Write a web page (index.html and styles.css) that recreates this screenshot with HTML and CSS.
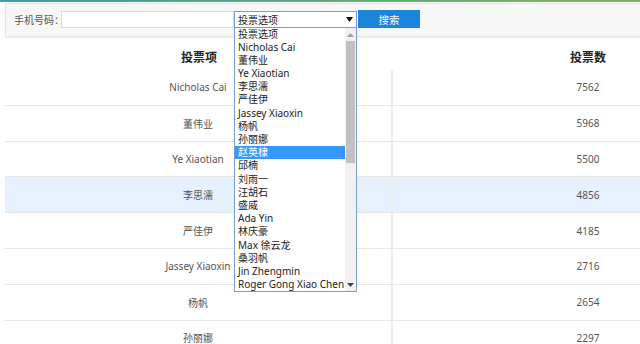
FILE: index.html
```html
<!DOCTYPE html>
<html lang="zh-CN">
<head>
  <meta charset="UTF-8">
  <title>投票结果查询</title>
  <link rel="stylesheet" href="styles.css">
</head>
<body>
  <div class="topline"></div>

  <div class="page">
    <div class="search-bar">
      <span class="label">手机号码：</span>
      <input type="text" class="phone">
      <div class="select-wrap">
        <div class="select-box">
          投票选项
          <svg class="arrow" width="7" height="5" viewBox="0 0 7 5"><polygon points="0,0 7,0 3.5,5" fill="#111"/></svg>
        </div>
        <div class="options">
          <ul class="option-list">
            <li>投票选项</li>
            <li>Nicholas Cai</li>
            <li>董伟业</li>
            <li>Ye Xiaotian</li>
            <li>李思濡</li>
            <li>严佳伊</li>
            <li>Jassey Xiaoxin</li>
            <li>杨帆</li>
            <li>孙丽娜</li>
            <li class="selected">赵英棣</li>
            <li>邱楠</li>
            <li>刘雨一</li>
            <li>汪胡石</li>
            <li>盛威</li>
            <li>Ada Yin</li>
            <li>林庆豪</li>
            <li>Max 徐云龙</li>
            <li>桑羽帆</li>
            <li>Jin Zhengmin</li>
            <li>Roger Gong Xiao Chen</li>
          </ul>
          <div class="scrollbar">
            <svg class="sb-up" width="7" height="4" viewBox="0 0 7 4"><polygon points="0,4 7,4 3.5,0" fill="#a3a3a3"/></svg>
            <div class="sb-track"><div class="sb-thumb"></div></div>
            <svg class="sb-down" width="7" height="4" viewBox="0 0 7 4"><polygon points="0,0 7,0 3.5,4" fill="#444"/></svg>
          </div>
        </div>
      </div>
      <button class="search-btn">搜索</button>
    </div>

    <table class="votes">
      <tr>
        <th>投票项</th>
        <th>投票数</th>
      </tr>
      <tr><td>Nicholas Cai</td><td>7562</td></tr>
      <tr><td>董伟业</td><td>5968</td></tr>
      <tr><td>Ye Xiaotian</td><td>5500</td></tr>
      <tr class="hover"><td>李思濡</td><td>4856</td></tr>
      <tr><td>严佳伊</td><td>4185</td></tr>
      <tr><td>Jassey Xiaoxin</td><td>2716</td></tr>
      <tr><td>杨帆</td><td>2654</td></tr>
      <tr><td>孙丽娜</td><td>2297</td></tr>
    </table>
  </div>
</body>
</html>
```

FILE: styles.css
```css
body {
  margin: 0;
  font-family: "Noto Sans", "Noto Sans CJK SC", sans-serif;
  font-size: 10px;
  color: #555;
  background-color: #fff;
  overflow: hidden;
}

.topline {
  height: 2px;
  background: linear-gradient(to right, #3c9ea6, #82b55a);
}

.page {
  width: 778px;
  margin-left: 5px;
}

.search-bar {
  display: flex;
  align-items: center;
  margin-top: 1px;
  padding: 6px 8px 8px;
  background-color: #f7f7f7;
  border: 1px solid #e6e6e6;
  box-shadow: 0 1px 2px rgba(0,0,0,0.08);
}

.label {
  flex-shrink: 0;
  width: 47px;
  white-space: nowrap;
  color: #555;
}

.phone {
  width: 173px;
  height: 17px;
  margin: 0;
  padding: 0;
  border: 1px solid #dcdcdc;
  box-sizing: border-box;
  background-color: #fff;
}

.select-wrap {
  position: relative;
  width: 123px;
}

.select-box {
  display: flex;
  align-items: center;
  height: 17px;
  padding-left: 3px;
  border: 1px solid #7b9bd6;
  box-sizing: border-box;
  background-color: #fff;
  color: #222;
}

.arrow {
  margin-left: auto;
  margin-right: 3px;
}

.options {
  position: absolute;
  top: 16px;
  left: 0;
  width: 123px;
  display: flex;
  border: 1px solid #7b9bd6;
  box-sizing: border-box;
  background-color: #fff;
  z-index: 5;
}

.option-list {
  flex: 1;
  margin: 0;
  padding: 0;
  list-style: none;
}

.option-list li {
  height: 13.2px;
  line-height: 13.2px;
  padding-left: 3px;
  color: #222;
  white-space: nowrap;
  overflow: hidden;
}

.option-list li.selected {
  background-color: #3399ff;
  color: #fff;
}

.scrollbar {
  width: 11px;
  display: flex;
  flex-direction: column;
  align-items: center;
  background-color: #f1f1f1;
}

.sb-up {
  margin-top: 5px;
}

.sb-track {
  flex: 1;
  width: 100%;
  padding: 4px 1px 0;
  box-sizing: border-box;
}

.sb-thumb {
  height: 122px;
  background-color: #c1c1c1;
}

.sb-down {
  margin-bottom: 4px;
}

.search-btn {
  width: 62px;
  height: 18px;
  margin-left: 1px;
  padding: 0;
  border: none;
  background-color: #1b86d7;
  color: #fff;
  font-family: inherit;
  font-size: 10.5px;
}

.votes {
  width: 778px;
  margin-top: 6px;
  border-collapse: separate;
  border-spacing: 0;
}

.votes th {
  height: 27px;
  padding: 0;
  font-size: 12px;
  font-weight: bold;
  color: #222;
  text-align: center;
}

.votes td {
  height: 34.8px;
  padding: 0;
  text-align: center;
  border-bottom: 1px solid #e6e6e6;
}

.votes th:first-child,
.votes td:first-child {
  width: 386px;
}

.votes td:first-child {
  border-right: 2px solid #ececec;
}

.votes tr.hover td {
  background-color: #e5f1fc;
}
```
